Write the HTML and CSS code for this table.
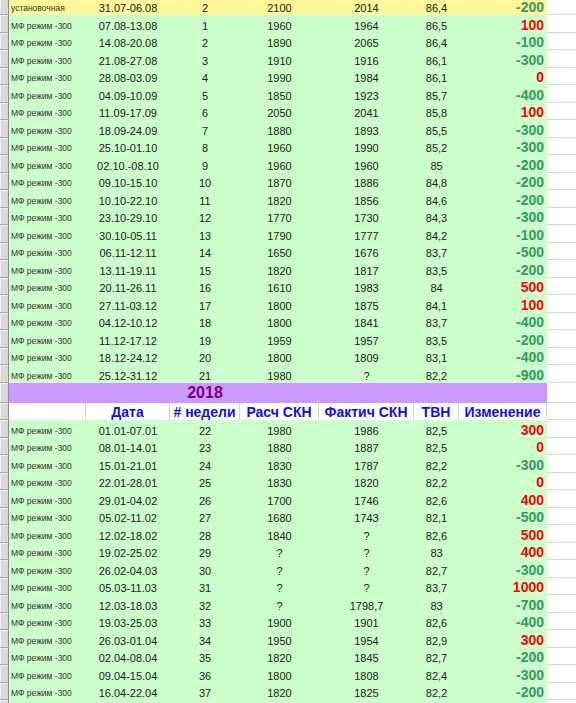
FILE: index.html
```html
<!DOCTYPE html>
<html lang="ru">
<head>
<meta charset="utf-8">
<title>СКН</title>
<link rel="stylesheet" href="styles.css">
</head>
<body>
<div class="sheet">
  <div class="row setup"><div class="rh"></div><div class="lbl">установочная</div><div class="c">31.07-06.08</div><div class="c">2</div><div class="c">2100</div><div class="c">2014</div><div class="c">86,4</div><div class="chg dn">-200</div><div class="pad"></div></div>
  <div class="row"><div class="rh"></div><div class="lbl">МФ режим -300</div><div class="c">07.08-13.08</div><div class="c">1</div><div class="c">1960</div><div class="c">1964</div><div class="c">86,5</div><div class="chg up">100</div><div class="pad"></div></div>
  <div class="row"><div class="rh"></div><div class="lbl">МФ режим -300</div><div class="c">14.08-20.08</div><div class="c">2</div><div class="c">1890</div><div class="c">2065</div><div class="c">86,4</div><div class="chg dn">-100</div><div class="pad"></div></div>
  <div class="row"><div class="rh"></div><div class="lbl">МФ режим -300</div><div class="c">21.08-27.08</div><div class="c">3</div><div class="c">1910</div><div class="c">1916</div><div class="c">86,1</div><div class="chg dn">-300</div><div class="pad"></div></div>
  <div class="row"><div class="rh"></div><div class="lbl">МФ режим -300</div><div class="c">28.08-03.09</div><div class="c">4</div><div class="c">1990</div><div class="c">1984</div><div class="c">86,1</div><div class="chg up">0</div><div class="pad"></div></div>
  <div class="row"><div class="rh"></div><div class="lbl">МФ режим -300</div><div class="c">04.09-10.09</div><div class="c">5</div><div class="c">1850</div><div class="c">1923</div><div class="c">85,7</div><div class="chg dn">-400</div><div class="pad"></div></div>
  <div class="row"><div class="rh"></div><div class="lbl">МФ режим -300</div><div class="c">11.09-17.09</div><div class="c">6</div><div class="c">2050</div><div class="c">2041</div><div class="c">85,8</div><div class="chg up">100</div><div class="pad"></div></div>
  <div class="row"><div class="rh"></div><div class="lbl">МФ режим -300</div><div class="c">18.09-24.09</div><div class="c">7</div><div class="c">1880</div><div class="c">1893</div><div class="c">85,5</div><div class="chg dn">-300</div><div class="pad"></div></div>
  <div class="row"><div class="rh"></div><div class="lbl">МФ режим -300</div><div class="c">25.10-01.10</div><div class="c">8</div><div class="c">1960</div><div class="c">1990</div><div class="c">85,2</div><div class="chg dn">-300</div><div class="pad"></div></div>
  <div class="row"><div class="rh"></div><div class="lbl">МФ режим -300</div><div class="c">02.10.-08.10</div><div class="c">9</div><div class="c">1960</div><div class="c">1960</div><div class="c">85</div><div class="chg dn">-200</div><div class="pad"></div></div>
  <div class="row"><div class="rh"></div><div class="lbl">МФ режим -300</div><div class="c">09.10-15.10</div><div class="c">10</div><div class="c">1870</div><div class="c">1886</div><div class="c">84,8</div><div class="chg dn">-200</div><div class="pad"></div></div>
  <div class="row"><div class="rh"></div><div class="lbl">МФ режим -300</div><div class="c">10.10-22.10</div><div class="c">11</div><div class="c">1820</div><div class="c">1856</div><div class="c">84,6</div><div class="chg dn">-200</div><div class="pad"></div></div>
  <div class="row"><div class="rh"></div><div class="lbl">МФ режим -300</div><div class="c">23.10-29.10</div><div class="c">12</div><div class="c">1770</div><div class="c">1730</div><div class="c">84,3</div><div class="chg dn">-300</div><div class="pad"></div></div>
  <div class="row"><div class="rh"></div><div class="lbl">МФ режим -300</div><div class="c">30.10-05.11</div><div class="c">13</div><div class="c">1790</div><div class="c">1777</div><div class="c">84,2</div><div class="chg dn">-100</div><div class="pad"></div></div>
  <div class="row"><div class="rh"></div><div class="lbl">МФ режим -300</div><div class="c">06.11-12.11</div><div class="c">14</div><div class="c">1650</div><div class="c">1676</div><div class="c">83,7</div><div class="chg dn">-500</div><div class="pad"></div></div>
  <div class="row"><div class="rh"></div><div class="lbl">МФ режим -300</div><div class="c">13.11-19.11</div><div class="c">15</div><div class="c">1820</div><div class="c">1817</div><div class="c">83,5</div><div class="chg dn">-200</div><div class="pad"></div></div>
  <div class="row"><div class="rh"></div><div class="lbl">МФ режим -300</div><div class="c">20.11-26.11</div><div class="c">16</div><div class="c">1610</div><div class="c">1983</div><div class="c">84</div><div class="chg up">500</div><div class="pad"></div></div>
  <div class="row"><div class="rh"></div><div class="lbl">МФ режим -300</div><div class="c">27.11-03.12</div><div class="c">17</div><div class="c">1800</div><div class="c">1875</div><div class="c">84,1</div><div class="chg up">100</div><div class="pad"></div></div>
  <div class="row"><div class="rh"></div><div class="lbl">МФ режим -300</div><div class="c">04.12-10.12</div><div class="c">18</div><div class="c">1800</div><div class="c">1841</div><div class="c">83,7</div><div class="chg dn">-400</div><div class="pad"></div></div>
  <div class="row"><div class="rh"></div><div class="lbl">МФ режим -300</div><div class="c">11.12-17.12</div><div class="c">19</div><div class="c">1959</div><div class="c">1957</div><div class="c">83,5</div><div class="chg dn">-200</div><div class="pad"></div></div>
  <div class="row"><div class="rh"></div><div class="lbl">МФ режим -300</div><div class="c">18.12-24.12</div><div class="c">20</div><div class="c">1800</div><div class="c">1809</div><div class="c">83,1</div><div class="chg dn">-400</div><div class="pad"></div></div>
  <div class="row"><div class="rh"></div><div class="lbl">МФ режим -300</div><div class="c">25.12-31.12</div><div class="c">21</div><div class="c">1980</div><div class="c">?</div><div class="c">82,2</div><div class="chg dn">-900</div><div class="pad"></div></div>
  <div class="row year"><div class="rh"></div><div class="yc"></div><div class="yc"></div><div class="yc ytitle">2018</div><div class="yc"></div><div class="yc"></div><div class="yc"></div><div class="yc"></div><div class="pad"></div></div>
  <div class="row head"><div class="rh"></div><div class="hc"></div><div class="hc">Дата</div><div class="hc"># недели</div><div class="hc">Расч СКН</div><div class="hc">Фактич СКН</div><div class="hc">ТВН</div><div class="hc">Изменение</div><div class="pad"></div></div>
  <div class="row"><div class="rh"></div><div class="lbl">МФ режим -300</div><div class="c">01.01-07.01</div><div class="c">22</div><div class="c">1980</div><div class="c">1986</div><div class="c">82,5</div><div class="chg up">300</div><div class="pad"></div></div>
  <div class="row"><div class="rh"></div><div class="lbl">МФ режим -300</div><div class="c">08.01-14.01</div><div class="c">23</div><div class="c">1880</div><div class="c">1887</div><div class="c">82,5</div><div class="chg up">0</div><div class="pad"></div></div>
  <div class="row"><div class="rh"></div><div class="lbl">МФ режим -300</div><div class="c">15.01-21.01</div><div class="c">24</div><div class="c">1830</div><div class="c">1787</div><div class="c">82,2</div><div class="chg dn">-300</div><div class="pad"></div></div>
  <div class="row"><div class="rh"></div><div class="lbl">МФ режим -300</div><div class="c">22.01-28.01</div><div class="c">25</div><div class="c">1830</div><div class="c">1820</div><div class="c">82,2</div><div class="chg up">0</div><div class="pad"></div></div>
  <div class="row"><div class="rh"></div><div class="lbl">МФ режим -300</div><div class="c">29.01-04.02</div><div class="c">26</div><div class="c">1700</div><div class="c">1746</div><div class="c">82,6</div><div class="chg up">400</div><div class="pad"></div></div>
  <div class="row"><div class="rh"></div><div class="lbl">МФ режим -300</div><div class="c">05.02-11.02</div><div class="c">27</div><div class="c">1680</div><div class="c">1743</div><div class="c">82,1</div><div class="chg dn">-500</div><div class="pad"></div></div>
  <div class="row"><div class="rh"></div><div class="lbl">МФ режим -300</div><div class="c">12.02-18.02</div><div class="c">28</div><div class="c">1840</div><div class="c">?</div><div class="c">82,6</div><div class="chg up">500</div><div class="pad"></div></div>
  <div class="row"><div class="rh"></div><div class="lbl">МФ режим -300</div><div class="c">19.02-25.02</div><div class="c">29</div><div class="c">?</div><div class="c">?</div><div class="c">83</div><div class="chg up">400</div><div class="pad"></div></div>
  <div class="row"><div class="rh"></div><div class="lbl">МФ режим -300</div><div class="c">26.02-04.03</div><div class="c">30</div><div class="c">?</div><div class="c">?</div><div class="c">82,7</div><div class="chg dn">-300</div><div class="pad"></div></div>
  <div class="row"><div class="rh"></div><div class="lbl">МФ режим -300</div><div class="c">05.03-11.03</div><div class="c">31</div><div class="c">?</div><div class="c">?</div><div class="c">83,7</div><div class="chg up">1000</div><div class="pad"></div></div>
  <div class="row"><div class="rh"></div><div class="lbl">МФ режим -300</div><div class="c">12.03-18.03</div><div class="c">32</div><div class="c">?</div><div class="c">1798,7</div><div class="c">83</div><div class="chg dn">-700</div><div class="pad"></div></div>
  <div class="row"><div class="rh"></div><div class="lbl">МФ режим -300</div><div class="c">19.03-25.03</div><div class="c">33</div><div class="c">1900</div><div class="c">1901</div><div class="c">82,6</div><div class="chg dn">-400</div><div class="pad"></div></div>
  <div class="row"><div class="rh"></div><div class="lbl">МФ режим -300</div><div class="c">26.03-01.04</div><div class="c">34</div><div class="c">1950</div><div class="c">1954</div><div class="c">82,9</div><div class="chg up">300</div><div class="pad"></div></div>
  <div class="row"><div class="rh"></div><div class="lbl">МФ режим -300</div><div class="c">02.04-08.04</div><div class="c">35</div><div class="c">1820</div><div class="c">1845</div><div class="c">82,7</div><div class="chg dn">-200</div><div class="pad"></div></div>
  <div class="row"><div class="rh"></div><div class="lbl">МФ режим -300</div><div class="c">09.04-15.04</div><div class="c">36</div><div class="c">1800</div><div class="c">1808</div><div class="c">82,4</div><div class="chg dn">-300</div><div class="pad"></div></div>
  <div class="row"><div class="rh"></div><div class="lbl">МФ режим -300</div><div class="c">16.04-22.04</div><div class="c">37</div><div class="c">1820</div><div class="c">1825</div><div class="c">82,2</div><div class="chg dn">-200</div><div class="pad"></div></div>
  <div class="row"><div class="rh"></div><div class="lbl"></div><div class="c"></div><div class="c"></div><div class="c"></div><div class="c"></div><div class="c"></div><div class="chg"></div><div class="pad"></div></div>
</div>
</body>
</html>
```
FILE: styles.css
```css
html, body {
  margin: 0;
  padding: 0;
  background: #ffffff;
  overflow: hidden;
}

body {
  font-family: "Liberation Sans", Arial, sans-serif;
  color: #1a1a1a;
}

.sheet {
  display: flex;
  flex-direction: column;
  margin-top: -2.5px;
  width: 576px;
}

.row {
  display: grid;
  grid-template-columns: 9px 77px 84px 70px 79px 95px 45px 88px 1fr;
  height: 17.5px;
  background: #ccffcc;
}

.row > div {
  display: flex;
  align-items: flex-end;
  min-width: 0;
  white-space: nowrap;
  overflow: visible;
}

.rh {
  background: #d9d9d9;
  border-right: 1px solid #8e8e8e;
  border-bottom: 1px solid #a6a6a6;
  box-shadow: inset 1px 1px 0 #f2f2f2;
}

.lbl {
  font-size: 8.5px;
  color: #333333;
  padding: 0 0 2px 2px;
}

.c {
  justify-content: center;
  font-size: 11px;
  padding-bottom: 1px;
}

.chg {
  justify-content: flex-end;
  font-size: 14px;
  font-weight: bold;
  padding-right: 3px;
  line-height: 16px;
}

.chg.dn {
  color: #339966;
}

.chg.up {
  color: #ff0000;
}

.pad {
  background: #ffffff;
  border-bottom: 1px solid #d4d4d4;
}

.setup {
  background: #fff799;
}

.year {
  height: 20px;
  background: #cc99ff;
}

.year > .yc {
  align-items: center;
  justify-content: center;
}

.ytitle {
  font-size: 16px;
  font-weight: bold;
  color: #800080;
}

.head {
  background: #ffffff;
}

.head > .hc {
  justify-content: center;
  align-items: center;
  font-size: 14px;
  font-weight: bold;
  color: #1010e6;
  border-right: 1px solid #d4d4d4;
  padding-top: 1px;
}
```
